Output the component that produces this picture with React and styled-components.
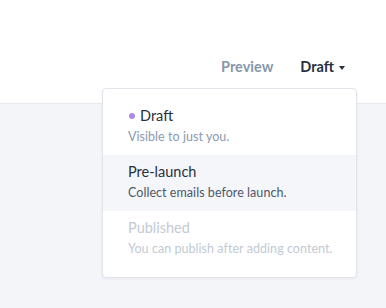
import React from 'react'
import styled, { createGlobalStyle } from 'styled-components'

const GlobalStyle = createGlobalStyle`
    html, body {
        margin: 0;
        padding: 0;
        background: #f4f5f9;
        font-family: Lato, "Open Sans", sans-serif;
    }
`

const Page = styled.div`
    position: relative;
    width: 386px;
    height: 308px;
    background: #f4f5f9;
    overflow: hidden;
`

const Header = styled.header`
    height: 104px;
    box-sizing: border-box;
    background: #fff;
    border-bottom: 1px solid #e6e9ef;
    display: flex;
    justify-content: flex-end;
    align-items: flex-start;
    padding: 57px 41px 0 0;
    gap: 27px;
`

const NavLink = styled.div`
    font-size: 14.5px;
    font-weight: 700;
    line-height: 20px;
    color: ${p => p.$active ? '#27303d' : '#8797ab'};
    display: flex;
    align-items: center;
    gap: 5px;
`

const Caret = styled.span`
    width: 0;
    height: 0;
    border-left: 3.5px solid transparent;
    border-right: 3.5px solid transparent;
    border-top: 4px solid #27303d;
    margin-top: 2px;
`

const Menu = styled.div`
    position: absolute;
    top: 88px;
    left: 102px;
    width: 255px;
    box-sizing: border-box;
    background: #fff;
    border: 1px solid #e1e4ea;
    border-radius: 4px;
    box-shadow: 0 1px 3px rgba(30, 40, 60, 0.06);
    padding: 10px 0;
`

const Item = styled.div`
    height: 56px;
    box-sizing: border-box;
    padding: 7px 0 0 25px;
    background: ${p => p.$hover ? '#f5f6fa' : 'transparent'};
`

const Title = styled.div`
    font-size: 14.5px;
    line-height: 20px;
    color: ${p => p.$disabled ? '#c2cad4' : '#27303d'};
    display: flex;
    align-items: center;
    gap: 5px;
`

const Dot = styled.span`
    width: 6px;
    height: 6px;
    border-radius: 50%;
    background: #a98ae6;
    margin-left: 1px;
`

const Sub = styled.div`
    margin-top: 2px;
    font-size: 12.5px;
    letter-spacing: 0.05px;
    line-height: 17px;
    color: ${p => p.$disabled ? '#c2cad4' : p.$dark ? '#4d5868' : '#8a9ab0'};
`

const App = () => {
    return (
        <Page>
            <GlobalStyle />
            <Header>
                <NavLink>Preview</NavLink>
                <NavLink $active>Draft <Caret /></NavLink>
            </Header>
            <Menu>
                <Item>
                    <Title><Dot />Draft</Title>
                    <Sub>Visible to just you.</Sub>
                </Item>
                <Item $hover>
                    <Title>Pre-launch</Title>
                    <Sub $dark>Collect emails before launch.</Sub>
                </Item>
                <Item>
                    <Title $disabled>Published</Title>
                    <Sub $disabled>You can publish after adding content.</Sub>
                </Item>
            </Menu>
        </Page>
    )
}

export default App
